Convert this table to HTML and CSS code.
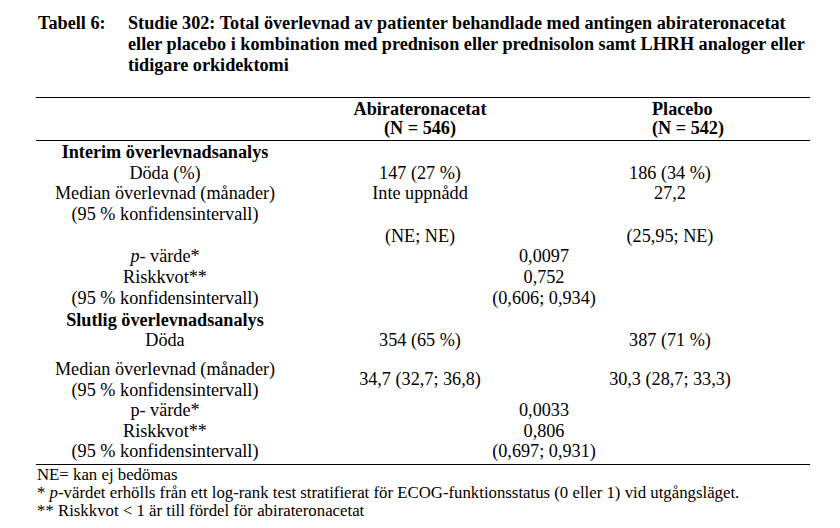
FILE: index.html
```html
<!DOCTYPE html>
<html lang="sv">
<head>
<meta charset="utf-8">
<title>Tabell 6</title>
<link rel="stylesheet" href="styles.css">
</head>
<body>
<div class="page">
  <div class="caption">
    <div class="caption-label">Tabell 6:</div>
    <div class="caption-text">Studie 302: Total överlevnad av patienter behandlade med antingen abirateronacetat<br>eller placebo i kombination med prednison eller prednisolon samt LHRH analoger eller<br>tidigare orkidektomi</div>
  </div>

  <div class="table">
    <div class="row head">
      <div class="cell"></div>
      <div class="cell">Abirateronacetat<br>(N = 546)</div>
      <div class="cell placebo">Placebo<br>(N = 542)</div>
    </div>

    <div class="body">
      <div class="row"><div class="cell b">Interim överlevnadsanalys</div><div class="cell"></div><div class="cell"></div></div>
      <div class="row"><div class="cell">Döda (%)</div><div class="cell">147 (27 %)</div><div class="cell">186 (34 %)</div></div>
      <div class="row"><div class="cell">Median överlevnad (månader)</div><div class="cell">Inte uppnådd</div><div class="cell">27,2</div></div>
      <div class="row"><div class="cell">(95 % konfidensintervall)</div><div class="cell"></div><div class="cell"></div></div>
      <div class="row gap-s"><div class="cell"></div><div class="cell">(NE; NE)</div><div class="cell">(25,95; NE)</div></div>
      <div class="row"><div class="cell"><i>p</i>- värde*</div><div class="cell span">0,0097</div></div>
      <div class="row"><div class="cell">Riskkvot**</div><div class="cell span">0,752</div></div>
      <div class="row"><div class="cell">(95 % konfidensintervall)</div><div class="cell span">(0,606; 0,934)</div></div>

      <div class="row gap-s"><div class="cell b">Slutlig överlevnadsanalys</div><div class="cell"></div><div class="cell"></div></div>
      <div class="row"><div class="cell">Döda</div><div class="cell">354 (65 %)</div><div class="cell">387 (71 %)</div></div>
      <div class="row gap-l mid"><div class="cell">Median överlevnad (månader)<br>(95 % konfidensintervall)</div><div class="cell">34,7 (32,7; 36,8)</div><div class="cell">30,3 (28,7; 33,3)</div></div>
      <div class="row"><div class="cell">p- värde*</div><div class="cell span">0,0033</div></div>
      <div class="row"><div class="cell">Riskkvot**</div><div class="cell span">0,806</div></div>
      <div class="row"><div class="cell">(95 % konfidensintervall)</div><div class="cell span">(0,697; 0,931)</div></div>
    </div>
  </div>

  <div class="notes">
    <div>NE= kan ej bedömas</div>
    <div>* <i>p</i>-värdet erhölls från ett log-rank test stratifierat för ECOG-funktionsstatus (0 eller 1) vid utgångsläget.</div>
    <div>** Riskkvot &lt; 1 är till fördel för abirateronacetat</div>
  </div>
</div>
</body>
</html>
```

FILE: styles.css
```css
html, body {
  margin: 0;
  padding: 0;
  background: #ffffff;
}

body {
  color: #000000;
  font-family: "Liberation Serif", "Times New Roman", serif;
  font-size: 18.2px;
  line-height: 20.6px;
}

.page {
  padding: 13px 0 0 36px;
}

.caption {
  display: flex;
  font-weight: bold;
  line-height: 21px;
  padding-left: 2px;
}

.caption-label {
  width: 90px;
  flex: none;
}

.caption-text {
  white-space: nowrap;
}

.table {
  width: 774px;
  margin-top: 21px;
  border-top: 1px solid #000;
  border-bottom: 1px solid #000;
}

.head {
  font-weight: bold;
  line-height: 19px;
  padding-top: 1.5px;
  padding-bottom: 2px;
  border-bottom: 1px solid #000;
}

.body {
  padding-top: 1.5px;
  padding-bottom: 2px;
}

.row {
  display: grid;
  grid-template-columns: 258px 252px 248px;
}

.cell {
  text-align: center;
  white-space: nowrap;
}

.head .placebo {
  text-align: left;
  padding-left: 106px;
}

.b {
  font-weight: bold;
}

.span {
  grid-column: 2 / 4;
}

.gap-s {
  margin-top: 1.5px;
}

.gap-l {
  margin-top: 8px;
}

.mid {
  align-items: center;
}

.notes {
  font-size: 16.8px;
  line-height: 18px;
  padding-top: 1px;
  padding-left: 1px;
  white-space: nowrap;
}
```
